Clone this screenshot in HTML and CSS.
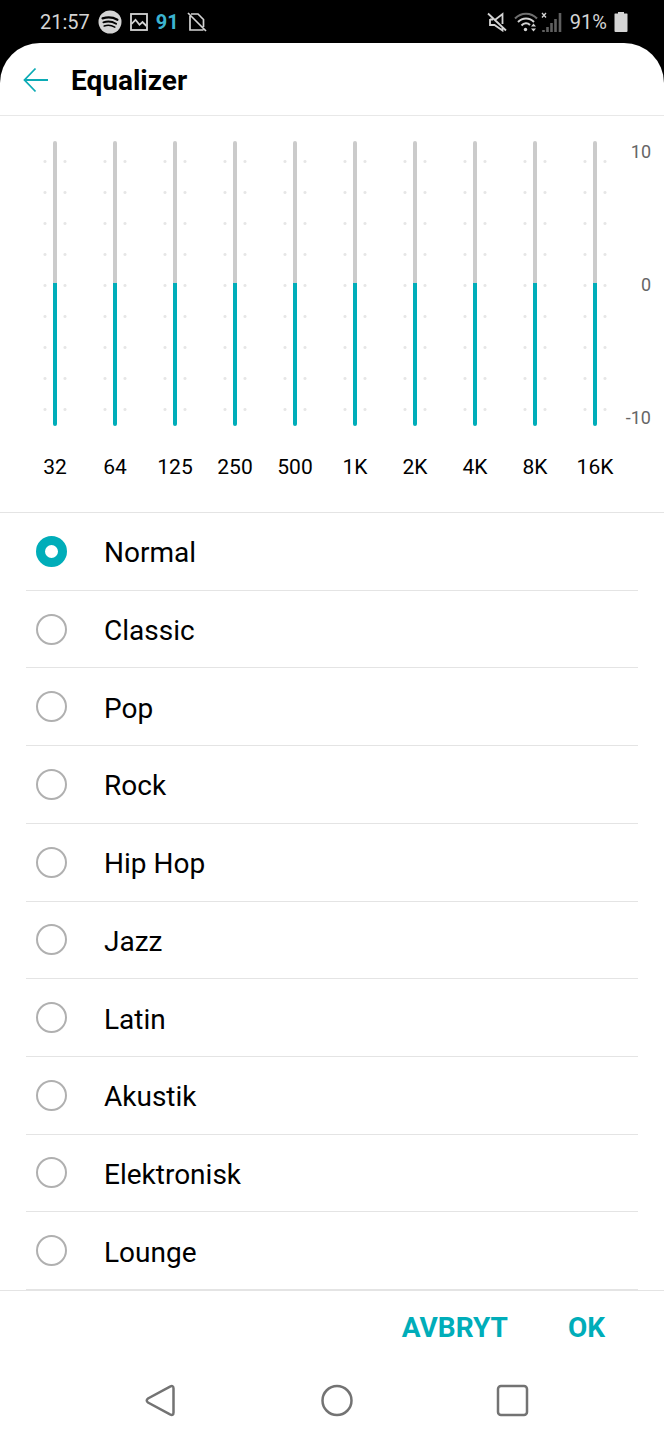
FILE: index.html
```html
<!DOCTYPE html>
<html lang="sv">
<head>
    <meta charset="UTF-8">
    <meta name="viewport" content="width=device-width, initial-scale=1.0">
    <title>Equalizer</title>
    <link rel="stylesheet" href="styles.css">
</head>
<body>

    <!-- Status bar -->
    <div class="status-bar">
        <div class="status-group">
            <span>21:57</span>
            <svg class="icon-spotify" width="24" height="24" viewBox="0 0 24 24">
                <circle cx="12" cy="12" r="11.5" fill="#d4d4d4"/>
                <g fill="none" stroke="#000" stroke-linecap="round">
                    <path d="M4.6 8.4C9.5 6.8 15 7.2 19.4 9.7" stroke-width="2.3"/>
                    <path d="M5.4 12.3C9.5 11 14.3 11.4 18.1 13.7" stroke-width="1.9"/>
                    <path d="M6.2 16C9.6 14.9 13.6 15.3 16.8 17.1" stroke-width="1.6"/>
                </g>
            </svg>
            <svg width="18" height="18" viewBox="0 0 18 18" fill="none" stroke="#d4d4d4" stroke-width="1.8">
                <rect x="1" y="1" width="16" height="16"/>
                <path d="M1.5 11L5.5 6.8L9.5 11.8L12.5 9L16.5 13"/>
            </svg>
            <span class="status-count">91</span>
            <svg width="20" height="20" viewBox="0 0 20 20" fill="none" stroke="#d4d4d4" stroke-width="1.7">
                <path d="M4 2H11L16.500 7.500V15M16.500 18H3V4M1 1L19 19"/>
            </svg>
        </div>
        <div class="status-group status-right">
            <svg width="20" height="20" viewBox="0 0 20 20" fill="none" stroke="#d4d4d4" stroke-width="1.8">
                <path d="M8.5 7.5L15.5 2V12M3 7V13H7.5L15.5 18.5V15M3 7.5H6M1 1.5L19 18.5"/>
            </svg>
            <svg width="24" height="20" viewBox="0 0 24 20" fill="none" stroke-width="2">
                <path d="M1 6.5C7 0 17 0 23 6.5" stroke="#707070"/>
                <path d="M4 10C8.5 5.2 15.5 5.2 20 10M7.5 13.5C10 10.8 13.5 10.6 16 13" stroke="#d4d4d4"/>
                <circle cx="11.5" cy="17.5" r="1.7" fill="#d4d4d4"/>
                <path d="M17 14.5L19.5 11.5L22 14.5ZM17 16.5L19.5 19.5L22 16.5Z" fill="#d4d4d4"/>
            </svg>
            <svg class="icon-signal" width="22" height="22" viewBox="0 0 22 22">
                <path d="M1 2L5 6.5M5 2L1 6.5" stroke="#d4d4d4" stroke-width="1.3"/>
                <path d="M2.500 19V21M6.500 16V21M10.500 12V21M14.500 8V21M19 2V21" stroke="#606060" stroke-width="2.6"/>
            </svg>
            <span>91%</span>
            <svg width="14" height="20" viewBox="0 0 14 20">
                <path d="M4 0H10V1.5H13Q13.5 1.5 13.5 2V19Q13.5 20 12.5 20H1.5Q.5 20 .5 19V2Q.5 1.5 1 1.5H4Z" fill="#d4d4d4"/>
            </svg>
        </div>
    </div>

    <div class="screen">
        <!-- Header -->
        <header class="header">
            <button class="back-button" type="button" aria-label="Tillbaka">
                <svg width="26" height="26" viewBox="0 0 26 26" fill="none" stroke="#0cabb5" stroke-width="1.8">
                    <path d="M13.5 1.5L2.5 13L13.5 24.5M2.5 13H26"/>
                </svg>
            </button>
            <h1>Equalizer</h1>
        </header>

        <!-- Frequency bands -->
        <section class="equalizer">
            <div class="bands">
                <label class="band"><input type="range" min="-10" max="10" value="0"><span>32</span></label>
                <label class="band"><input type="range" min="-10" max="10" value="0"><span>64</span></label>
                <label class="band"><input type="range" min="-10" max="10" value="0"><span>125</span></label>
                <label class="band"><input type="range" min="-10" max="10" value="0"><span>250</span></label>
                <label class="band"><input type="range" min="-10" max="10" value="0"><span>500</span></label>
                <label class="band"><input type="range" min="-10" max="10" value="0"><span>1K</span></label>
                <label class="band"><input type="range" min="-10" max="10" value="0"><span>2K</span></label>
                <label class="band"><input type="range" min="-10" max="10" value="0"><span>4K</span></label>
                <label class="band"><input type="range" min="-10" max="10" value="0"><span>8K</span></label>
                <label class="band"><input type="range" min="-10" max="10" value="0"><span>16K</span></label>
            </div>
            <div class="scale">
                <span>10</span>
                <span>0</span>
                <span>-10</span>
            </div>
        </section>

        <!-- Presets -->
        <form class="presets" id="presets">
            <label class="preset"><input type="radio" name="preset" checked><span>Normal</span></label>
            <label class="preset"><input type="radio" name="preset"><span>Classic</span></label>
            <label class="preset"><input type="radio" name="preset"><span>Pop</span></label>
            <label class="preset"><input type="radio" name="preset"><span>Rock</span></label>
            <label class="preset"><input type="radio" name="preset"><span>Hip Hop</span></label>
            <label class="preset"><input type="radio" name="preset"><span>Jazz</span></label>
            <label class="preset"><input type="radio" name="preset"><span>Latin</span></label>
            <label class="preset"><input type="radio" name="preset"><span>Akustik</span></label>
            <label class="preset"><input type="radio" name="preset"><span>Elektronisk</span></label>
            <label class="preset"><input type="radio" name="preset"><span>Lounge</span></label>
        </form>

        <div class="actions">
            <button type="reset" form="presets">AVBRYT</button>
            <button type="button">OK</button>
        </div>

        <!-- Navigation bar -->
        <nav class="nav-bar">
            <button type="button" aria-label="Bakåt">
                <svg width="34" height="34" viewBox="0 0 34 34">
                    <path d="M27 3.600Q30.500 2 30.500 5.500V29.500Q30.500 33 27 31.400L5 19.500Q2.500 17.500 5 15.500Z"/>
                </svg>
            </button>
            <button type="button" aria-label="Hem">
                <svg width="34" height="34" viewBox="0 0 34 34">
                    <circle cx="17" cy="17.500" r="14.500"/>
                </svg>
            </button>
            <button type="button" aria-label="Översikt">
                <svg width="34" height="34" viewBox="0 0 34 34">
                    <rect x="2" y="3" width="29" height="29" rx="3"/>
                </svg>
            </button>
        </nav>
    </div>

</body>
</html>
```
FILE: styles.css
```css
* {
    box-sizing: border-box;
}
body {
    display: flex;
    flex-direction: column;
    min-height: 100vh;
    margin: 0;
    background-color: #000;
    color: #000;
    font-family: Roboto, "Liberation Sans", sans-serif;
}
button {
    padding: 0;
    border: none;
    background: none;
    font-family: inherit;
    cursor: pointer;
}
svg {
    display: block;
}

/* Status bar */
.status-bar {
    display: flex;
    justify-content: space-between;
    height: 43px;
    padding: 0 36px 0 40px;
    color: #d4d4d4;
    font-size: 20px;
}
.status-group {
    display: flex;
    align-items: center;
    gap: 8px;
}
.status-right {
    gap: 7px;
}
.status-count {
    color: #3cb4d0;
    font-weight: bold;
}
.icon-signal {
    margin-left: -4px;
}

.screen {
    display: flex;
    flex-direction: column;
    flex: 1;
    background-color: #fff;
    border-radius: 40px 40px 0 0;
}

/* Header */
.header {
    display: flex;
    align-items: center;
    gap: 23px;
    height: 73px;
    padding: 2px 22px 0;
    border-bottom: 1px solid #e8e8e8;
}
.header h1 {
    margin: 0;
    font-size: 28px;
    font-weight: bold;
}

/* Frequency bands */
.equalizer {
    display: flex;
    height: 397px;
    padding: 25px 13px 0 25px;
    border-bottom: 1px solid #e4e4e4;
}
.bands {
    display: grid;
    grid-template-columns: repeat(10, 1fr);
    flex: 1;
}
.band {
    display: flex;
    flex-direction: column;
    align-items: center;
    gap: 28px;
    font-size: 21px;
    line-height: 26px;
}
.band input {
    appearance: none;
    writing-mode: vertical-lr;
    direction: rtl;
    width: 24px;
    height: 285px;
    margin: 0;
    background-image: radial-gradient(circle, #e6e6e6 1px, transparent 2px), radial-gradient(circle, #e6e6e6 1px, transparent 2px);
    background-size: 4px 31px;
    background-position: left 5px, right 5px;
    background-repeat: repeat-y;
}
.band input::-webkit-slider-runnable-track {
    width: 4px;
    height: 285px;
    border-radius: 2px;
    background: linear-gradient(#cbcbcb 50%, #00adb9 50%);
}
.band input::-webkit-slider-thumb {
    appearance: none;
    width: 4px;
    height: 2px;
    border-radius: 2px;
    background-color: #00adb9;
}
.scale {
    display: flex;
    flex-direction: column;
    justify-content: space-between;
    align-items: flex-end;
    width: 26px;
    height: 288px;
    color: #666;
    font-size: 18px;
    line-height: 22px;
}

/* Presets */
.presets {
    display: flex;
    flex-direction: column;
    flex: 1;
    padding: 0 26px;
}
.preset {
    display: flex;
    align-items: center;
    flex: 1;
    gap: 37px;
    padding-left: 10px;
    border-bottom: 1px solid #e4e4e4;
    font-size: 28px;
    line-height: 34px;
}
.preset span {
    padding-top: 4px;
}
.preset input {
    appearance: none;
    width: 31px;
    height: 31px;
    margin: 0;
    border: 2px solid #b0b0b0;
    border-radius: 50%;
}
.preset input:checked {
    border: 9px solid #00adb9;
}

/* Actions */
.actions {
    display: flex;
    align-items: center;
    justify-content: flex-end;
    gap: 60px;
    height: 71px;
    padding: 3px 59px 0;
    border-top: 1px solid #e4e4e4;
}
.actions button {
    color: #00adb9;
    font-size: 28px;
    font-weight: bold;
}

/* Navigation bar */
.nav-bar {
    display: flex;
    justify-content: space-between;
    height: 79px;
    padding: 22px 134px 0 143px;
}
.nav-bar button {
    height: 34px;
}
.nav-bar svg {
    fill: none;
    stroke: #737373;
    stroke-width: 2.5;
}
```
